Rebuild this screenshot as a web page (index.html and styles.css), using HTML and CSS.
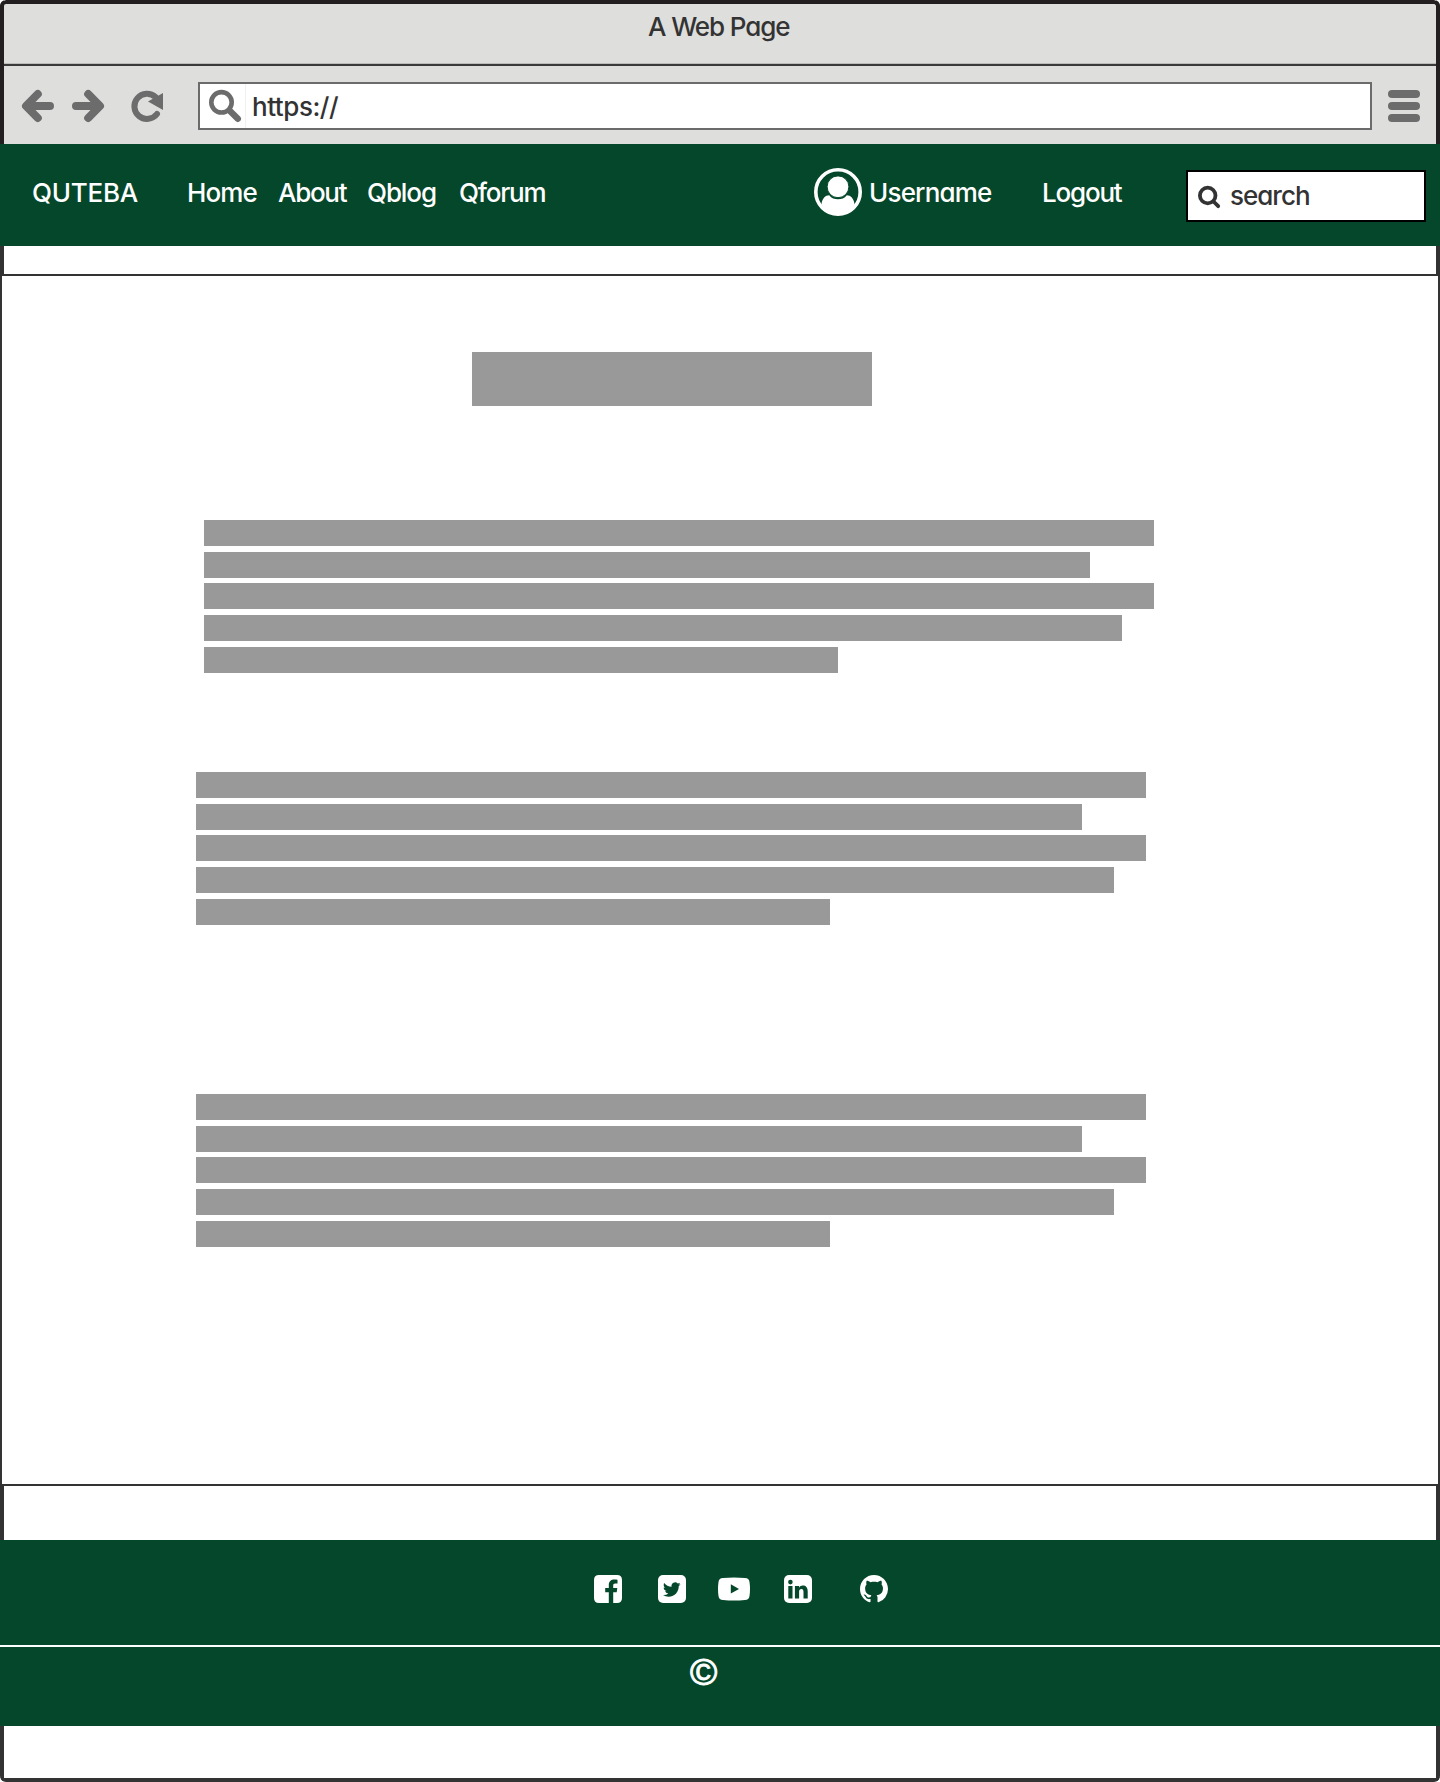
FILE: index.html
```html
<!DOCTYPE html>
<html lang="en">
<head>
<meta charset="utf-8">
<title>A Web Page</title>
<link rel="stylesheet" href="styles.css">
</head>
<body>
<div class="window">
  <header class="chrome">
    <div class="titlebar"><span class="title">A Web Page</span></div>
    <div class="toolbar">
      <svg class="nav-icons" width="194" height="48" viewBox="4 82 194 48">
        <g fill="none" stroke="#6c6c6c" stroke-width="8" stroke-linecap="round" stroke-linejoin="round">
          <path d="M50 106H27M37.8 94L26 106L37.8 118"/>
          <path d="M76 106H99M88.200 94L100 106L88.200 118"/>
        </g>
        <path d="M157 114A12.600 12.600 0 1 1 155.500 97" fill="none" stroke="#6c6c6c" stroke-width="6" stroke-linecap="round"/>
        <path d="M163 93V110L148 101.500Z" fill="#6c6c6c"/>
      </svg>
      <div class="address">
        <svg width="45" height="44" viewBox="200 84 45 44" fill="none" stroke="#6c6c6c">
          <circle cx="221.500" cy="102.300" r="10.200" stroke-width="4.600"/>
          <path d="M230 111L237.800 118.800" stroke-width="6.400" stroke-linecap="round"/>
        </svg>
        <span class="url">https://</span>
      </div>
      <div class="burger"><i></i><i></i><i></i></div>
    </div>
  </header>

  <nav class="navbar">
    <a class="brand">QUTEBA</a>
    <a class="home">Home</a>
    <a class="about">About</a>
    <a class="qblog">Qblog</a>
    <a class="qforum">Qforum</a>
    <svg class="avatar" width="48" height="48" viewBox="0 0 48 48">
      <circle cx="24" cy="24" r="22.200" fill="none" stroke="#fff" stroke-width="3.600"/>
      <path d="M7.500 36.500C8 30.500 11.500 27.300 15.200 27.300C17.500 30.300 20.500 31.300 24 31.300S30.500 30.300 32.800 27.300C36.500 27.300 40 30.500 40.500 36.500C36.500 43 31 46.500 24 46.500S11.500 43 7.500 36.500Z" fill="#fff"/>
      <circle cx="24" cy="18.800" r="10.900" fill="#fff" stroke="#05472a" stroke-width="1"/>
    </svg>
    <a class="username">Username</a>
    <a class="logout">Logout</a>
    <div class="search">
      <svg width="24" height="26" viewBox="0 0 24 26" fill="none" stroke="#333">
        <circle cx="10.700" cy="11.500" r="7.800" stroke-width="3.800"/>
        <path d="M16.500 17.500L21.200 22.200" stroke-width="3.800" stroke-linecap="round"/>
      </svg>
      <span class="search-text">search</span>
    </div>
  </nav>

  <main class="page">
    <div class="heading"></div>
    <div class="para first"><i class="w100"></i><i class="w93"></i><i class="w100"></i><i class="w97"></i><i class="w67"></i></div>
    <div class="para second"><i class="w100"></i><i class="w93"></i><i class="w100"></i><i class="w97"></i><i class="w67"></i></div>
    <div class="para third"><i class="w100"></i><i class="w93"></i><i class="w100"></i><i class="w97"></i><i class="w67"></i></div>
  </main>

  <footer class="footer">
    <div class="social">
      <svg width="28" height="28" viewBox="0 0 28 28"><path fill="#fff" d="M5 0H23Q28 0 28 5V23Q28 28 23 28H19.200V17.300H22.700L23.300 13H19.200V10.500C19.200 9.200 19.600 8.500 21.300 8.500H23.500V4.700C23 4.600 21.800 4.500 20.300 4.500C17 4.500 14.800 6.500 14.800 10V13H11.200V17.300H14.800V28H5Q0 28 0 23V5Q0 0 5 0Z"/></svg>
      <svg class="tw" width="28" height="28" viewBox="0 0 28 28"><rect width="28" height="28" rx="5" fill="#fff"/><path fill="#05472a" transform="translate(5 5.800) scale(.73)" d="M23.953 4.570a10 10 0 01-2.825.775 4.958 4.958 0 002.163-2.723c-.951.555-2.005.959-3.127 1.184a4.920 4.920 0 00-8.384 4.482C7.690 8.095 4.067 6.130 1.640 3.162a4.822 4.822 0 00-.666 2.475c0 1.710.870 3.213 2.188 4.096a4.904 4.904 0 01-2.228-.616v.060a4.923 4.923 0 003.946 4.827 4.996 4.996 0 01-2.212.085 4.936 4.936 0 004.604 3.417 9.867 9.867 0 01-6.102 2.105c-.390 0-.779-.023-1.170-.067a13.995 13.995 0 007.557 2.209c9.053 0 13.998-7.496 13.998-13.985 0-.210 0-.420-.015-.630A9.935 9.935 0 0024 4.590z"/></svg>
      <svg class="yt" width="32" height="28" viewBox="0 0 32 28"><path fill="#fff" d="M5 3Q16 2 27 3Q31 3.200 31.500 7Q32.500 14 31.500 21Q31 24.800 27 25Q16 26 5 25Q1 24.800 .5 21Q-.5 14 .5 7Q1 3.200 5 3Z"/><path fill="#05472a" d="M12.800 9.300L21 13.900L12.800 18.500Z"/></svg>
      <svg class="in" width="28" height="28" viewBox="0 0 28 28"><rect width="28" height="28" rx="5" fill="#fff"/><g fill="#05472a"><circle cx="6.400" cy="7.100" r="2.300"/><path d="M4.300 10.900H8.500V23.500H4.300ZM10.900 10.900H15.100V12.700C15.900 11.500 17 10.600 18.900 10.600C21.700 10.600 23.700 12.400 23.700 16.300V23.500H19.500V16.800C19.500 15.100 18.900 14 17.400 14C15.800 14 15.100 15.200 15.100 16.600V23.500H10.900Z"/></g></svg>
      <svg class="gh" width="28" height="28" viewBox="0 0 16 16"><path fill="#fff" d="M8 0C3.580 0 0 3.580 0 8c0 3.540 2.290 6.530 5.470 7.590.400.070.550-.170.550-.380 0-.190-.010-.820-.010-1.490-2.010.370-2.530-.490-2.690-.940-.090-.230-.480-.940-.820-1.130-.280-.150-.680-.520-.010-.530.630-.010 1.080.580 1.230.820.720 1.210 1.870.870 2.330.660.070-.520.280-.870.510-1.070-1.780-.200-3.640-.890-3.640-3.950 0-.870.310-1.590.820-2.150-.080-.200-.360-1.020.080-2.120 0 0 .670-.210 2.200.820.640-.180 1.320-.270 2-.270.680 0 1.360.090 2 .270 1.530-1.040 2.200-.820 2.200-.820.440 1.100.160 1.920.080 2.120.510.560.820 1.270.820 2.150 0 3.070-1.870 3.750-3.650 3.950.290.250.540.730.540 1.480 0 1.070-.010 1.930-.010 2.200 0 .210.150.460.550.380A8.013 8.013 0 0016 8c0-4.420-3.580-8-8-8z"/></svg>
    </div>
    <div class="copyright"><span>©</span></div>
  </footer>
</div>
</body>
</html>
```
FILE: styles.css
```css
* { box-sizing: border-box; }
body {
  margin: 0;
  background: #fff;
  font: 500 26px/32px Inter, "Noto Sans", sans-serif;
  font-feature-settings: "cv11";
  color: #333;
}
svg { display: block; flex: none; }
.window {
  display: flex;
  flex-direction: column;
  height: 1782px;
  border-bottom: 4px solid #333;
  border-radius: 6px;
  overflow: hidden;
  background: linear-gradient(#333, #333) left / 4px 100% no-repeat, linear-gradient(#333, #333) right / 4px 100% no-repeat, #fff;
}
.chrome {
  height: 144px;
  border: 4px solid #231f20;
  border-bottom: 0;
  border-radius: 6px 6px 0 0;
  background: #dededc;
}
.titlebar {
  display: flex;
  height: 62px;
  padding: 7px 0 0 644px;
  border-bottom: 2px solid #3b3a3a;
  box-shadow: inset 0 -1px #bcbcbb;
}
.title { white-space: nowrap; letter-spacing: -1.1px; }
.toolbar { display: flex; height: 78px; padding-top: 16px; }
.address {
  display: flex;
  width: 1174px;
  height: 48px;
  border: 2px solid #6b6b6b;
  background: #fff;
}
.url { padding: 7px 0 0 6px; border-left: 1px solid #f1f1f1; letter-spacing: -.45px; }
.burger { display: flex; flex-direction: column; gap: 4px; width: 32px; margin: 8px 0 0 16px; }
.burger i { height: 8px; border-radius: 4px; background: #6c6c6c; }
.navbar {
  display: flex;
  flex: none;
  height: 102px;
  padding-top: 24px;
  padding-left: 32px;
  background: #05472a;
  color: #fff;
}
.navbar a { flex: none; padding-top: 9px; white-space: nowrap; }
.navbar .brand { width: 155px; letter-spacing: -.25px; }
.navbar .home { width: 91px; letter-spacing: -.9px; }
.navbar .about { width: 89px; letter-spacing: -1.3px; }
.navbar .qblog { width: 92px; letter-spacing: -1.1px; }
.navbar .qforum { width: 355px; letter-spacing: -1.2px; }
.avatar { margin-right: 7px; }
.navbar .username { width: 173px; letter-spacing: -.8px; }
.navbar .logout { width: 144px; letter-spacing: -1.2px; }
.search {
  display: flex;
  width: 240px;
  height: 52px;
  margin-top: 2px;
  padding: 12px 0 0 9px;
  border: 2px solid #000;
  background: #fff;
  color: #333;
}
.search-text { margin: -4px 0 0 9px; letter-spacing: -1px; }
.page {
  flex: none;
  height: 1212px;
  margin-top: 28px;
  padding-top: 76px;
  border: 2px solid #333;
  background: #fff;
}
.heading { width: 400px; height: 54px; margin-left: 470px; background: #999; }
.para { display: flex; flex-direction: column; gap: 5.670px; width: 950px; margin-left: 194px; }
.para i { height: 26px; background: #999; }
.first { margin: 114px 0 0 202px; }
.second { margin-top: 99.320px; }
.third { margin-top: 169.320px; }
.para .w100 { width: 950px; }
.para .w93 { width: 886px; }
.para .w97 { width: 918px; }
.para .w67 { width: 634px; }
.footer { flex: none; height: 186px; margin-top: 54px; background: #05472a; color: #fff; }
.social { display: flex; height: 107px; padding: 34.500px 0 0 594px; border-bottom: 2px solid #fff; }
.tw { margin-left: 36px; }
.yt { margin-left: 32px; }
.in { margin-left: 34px; }
.gh { margin-left: 48px; }
.copyright {
  padding: 8px 0 0 690px;
  font: 400 37px/36px "Liberation Sans", sans-serif;
  -webkit-text-stroke: 1px #fff;
}
```
